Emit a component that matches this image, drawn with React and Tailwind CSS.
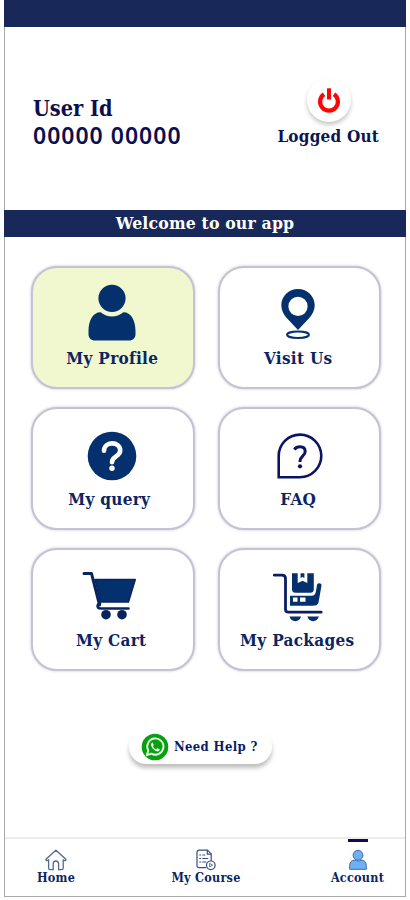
import clsx from 'clsx'

// ==========================================
// 1. ICONS
// ==========================================
function PowerIcon() {
  return (
    <svg width="24" height="26" viewBox="0 0 24 26" fill="none" stroke="#fb0505">
      <path d="M7 7.300a8.900 8.900 0 1 0 10 0" strokeWidth="4.200" />
      <path d="M12 1.300v11.200" strokeWidth="4" />
    </svg>
  )
}

function ProfileIcon() {
  return (
    <svg width="48" height="58" viewBox="0 0 48 58" fill="#04316d">
      <circle cx="24" cy="14.3" r="13.6" />
      <path d="M12.5 28.2C16 31 20 32.4 24 32.4s8-1.4 11.500-4.200C42.500 28 47.500 36 47.500 47v3c0 4-2.500 6.500-6.500 6.500H7C3 56.500.5 54 .5 50v-3C.5 36 5.500 28 12.500 28.200Z" />
    </svg>
  )
}

function PinIcon() {
  return (
    <svg width="36" height="52" viewBox="0 0 36 52" fill="none">
      <path fillRule="evenodd" fill="#04316d" d="M18 1C8.600 1 1.300 8.300 1.300 17.300c0 5 2.200 8.800 5.200 12.400L18 42l11.500-12.300c3-3.600 5.200-7.400 5.200-12.400C34.700 8.300 27.400 1 18 1Zm0 7.800a9.600 9.600 0 1 1 0 19.200 9.600 9.600 0 0 1 0-19.200Z" />
      <ellipse cx="18" cy="46.700" rx="11" ry="3.2" stroke="#04316d" strokeWidth="2" />
    </svg>
  )
}

function QueryIcon() {
  return (
    <svg width="50" height="50" viewBox="0 0 50 50" fill="none">
      <circle cx="25" cy="25" r="24.300" fill="#04316d" />
      <path d="M17 19.700c0-4.500 3.500-7.300 8-7.300s8.200 2.700 8.200 7.200c0 6.200-8.200 5.400-8.200 11.600" stroke="#fff" strokeWidth="4.600" strokeLinecap="round" />
      <circle cx="25" cy="37.300" r="2.700" fill="#fff" />
    </svg>
  )
}

function FaqIcon() {
  return (
    <svg width="46" height="46" viewBox="0 0 46 46" fill="none" stroke="#0b1462">
      <path d="M1.700 44.200V23A21.300 21.300 0 1 1 23 44.200Z" strokeWidth="2.600" />
      <path d="M17.300 16.500c1.500-2 3.500-2.700 5.700-2.700 3.300 0 5.200 1.800 5.200 4.700 0 4.500-5.200 4.700-5.200 9.500v1" strokeWidth="3" />
      <circle cx="23" cy="33.300" r="2.100" fill="#0b1462" stroke="none" />
    </svg>
  )
}

function CartIcon() {
  return (
    <svg width="54" height="50" viewBox="0 0 54 50" fill="none" stroke="#08245f" strokeLinecap="round" strokeLinejoin="round">
      <path d="M2 2.500h7.500L17.500 34" strokeWidth="3" />
      <path d="M13 8.500h40.300L46.500 31H18.500Z" fill="#04316d" strokeWidth="1.500" />
      <path d="M18 32.500c-3.500 1-3 5 .5 5H46.500" strokeWidth="2.600" />
      <circle cx="24" cy="43.700" r="4.800" fill="#08245f" stroke="none" />
      <circle cx="40" cy="43.700" r="4.800" fill="#08245f" stroke="none" />
    </svg>
  )
}

function PackagesIcon() {
  return (
    <svg width="50" height="51" viewBox="0 0 50 51" fill="#04316d">
      <path d="M1.300 3.200H9c2.500 0 3.500 1.200 3.500 3.500v30.500c0 2 1 3 3 3h32.700" fill="none" stroke="#0b1c66" strokeWidth="2.800" strokeLinecap="round" />
      <path d="M19 1.200h5.700V11l4.800-2.200 4.800 2.200V1.200h6.500V17c0 2.500-1 3.700-3.500 3.700H22.500c-2.500 0-3.500-1.200-3.500-3.700Z" />
      <path d="M27.600 1.200h3.800V6l-1.900-1.100L27.600 6Z" />
      <path fillRule="evenodd" d="M17 23.700h21.500c3 0 4-1.700 4.500-4.700l1-6c.5-2.700 4.800-2.200 4.500.5l-2.700 15.600c-.7 4-2.300 4.600-5.800 4.600H17Zm3 1.800v4.200h4.500v-4.200Zm7 0v4.200h5.500v-4.200Z" />
      <path d="M16.500 44.500h11.600c-1 2.800-3 4.700-5.800 4.700s-4.800-1.900-5.800-4.700ZM34.300 44.500h11.600c-1 2.800-3 4.700-5.800 4.700s-4.800-1.900-5.800-4.700Z" />
    </svg>
  )
}

function WhatsappIcon() {
  return (
    <svg width="28" height="28" viewBox="0 0 28 28" fill="none">
      <circle cx="14" cy="14" r="13.300" fill="#08a012" />
      <path d="m5.800 22.200 1.500-4.700a8.100 8.100 0 1 1 3.100 3.100Z" stroke="#e8ffe4" strokeWidth="1.900" strokeLinejoin="round" />
      <path d="M11.700 9.500c-1.700.5-2 2-1.300 3.700 1 2.400 2.700 4.100 5.200 5 1.700.6 3-.2 3.200-1.800l-2.500-1.300-1.200 1.300c-1.500-.7-2.500-1.700-3.200-3.200l1-1.200Z" fill="#e8ffe4" />
    </svg>
  )
}

function HomeIcon() {
  return (
    <svg width="22" height="22" viewBox="0 0 22 22" fill="none" stroke="#52688f" strokeWidth="1.300" strokeLinejoin="round">
      <path d="M10.900 1.200 1.200 10c-.7.900.3 2 1.300 1.500l1.100-.7V19c0 1 .6 1.700 1.600 1.700h3V15c0-2 1.100-3 2.700-3s2.700 1 2.700 3v5.700h3c1 0 1.600-.7 1.600-1.700v-8.200l1.200.7c1 .5 2-.6 1.200-1.500Z" />
    </svg>
  )
}

function CourseIcon() {
  return (
    <svg width="20" height="22" viewBox="0 0 20 22" fill="none" stroke="#36517d" strokeWidth="1.200" strokeLinecap="round">
      <path d="M9.500 18.700H3.200c-1.400 0-2.200-.8-2.200-2.200v-13C1 2 1.800 1.200 3.200 1.200h8.300l3.700 3.700v6.600" />
      <path d="M11.300 1.500v3.700H15" />
      <path d="M3.700 6h1M6.800 6h2M3.700 9.500h1M6.800 9.500h5M3.700 13h1M6.800 13h3" />
      <circle cx="14.800" cy="16.300" r="4.300" fill="#fff" />
      <path d="M13.600 14.700v3.200l2.700-1.600Z" strokeWidth=".8" />
    </svg>
  )
}

function AccountIcon() {
  return (
    <svg width="20" height="22" viewBox="0 0 20 22" fill="#6db1f4" stroke="#466a9e" strokeWidth="1">
      <circle cx="10" cy="6.200" r="4.900" />
      <path d="M1.700 20.300v-3.800c0-3.300 2-5.400 5-5.400 1.800 1.200 4.800 1.200 6.600 0 3 0 5 2.100 5 5.400v3.800Z" />
    </svg>
  )
}

// ==========================================
// 2. TILES AND TABS
// ==========================================
const tiles = [
  { label: 'My Profile', Icon: ProfileIcon, active: true, iconBox: 'pt-[16px] pr-[2px]', text: 'pr-[1px]' },
  { label: 'Visit Us', Icon: PinIcon, iconBox: 'pt-[20px] pr-[2px]', text: 'pr-[2px]' },
  { label: 'My query', Icon: QueryIcon, iconBox: 'pt-[22px] pr-[2px]', text: 'pr-[7px]' },
  { label: 'FAQ', Icon: FaqIcon, iconBox: 'pt-[24px] pl-[1px]', text: 'pr-[2px]' },
  { label: 'My Cart', Icon: CartIcon, iconBox: 'pt-[21px] pr-[7px]', text: 'pr-[3px]' },
  { label: 'My Packages', Icon: PackagesIcon, iconBox: 'pt-[22px] pr-[3px]', text: 'pr-[4px]' },
]

const tabs = [
  { label: 'Home', Icon: HomeIcon, box: 'w-[102px]' },
  { label: 'My Course', Icon: CourseIcon, box: 'w-[204px] pr-[6px]' },
  { label: 'Account', Icon: AccountIcon, active: true, box: 'w-[93px]' },
]

function Tile({ label, Icon, active, iconBox, text }) {
  return (
    <button
      className={clsx(
        'flex h-[123px] flex-col items-center rounded-[26px] border-2 border-[#c3c3d3] shadow-[0_0_3px_#c4c4d6]',
        active ? 'bg-[#f1f8cf]' : 'bg-white'
      )}
    >
      <span className={clsx('flex h-[78px] items-start', iconBox)}>
        <Icon />
      </span>
      <span className={clsx('text-[17px] leading-[24px] font-bold tracking-[0.3px] whitespace-nowrap text-[#0b2463]', text)}>
        {label}
      </span>
    </button>
  )
}

// ==========================================
// 3. ACCOUNT SCREEN
// ==========================================
export default function App() {
  return (
    <div className="h-[900px] w-[410px] bg-white pr-1 pl-1 font-['DejaVu_Serif_Condensed','DejaVu_Serif',serif] [font-stretch:condensed]">
      <div className="flex h-[897px] flex-col border border-t-0 border-[#a9a9a9]">
        <div className="-mx-px h-[27px] shrink-0 bg-[#172859]" />

        <header className="flex h-[183px] shrink-0 justify-between pr-[26px] pl-[28px]">
          <div className="pt-[69px] text-[#0b0f50]">
            <p className="text-[21.500px] leading-[26px] font-bold">User Id</p>
            <p className="font-['Noto_Sans',sans-serif] text-[23px] leading-[26px] font-semibold tracking-[1px]">00000 00000</p>
          </div>
          <div className="flex flex-col items-center pt-[51px]">
            <span className="ml-[2px] flex h-[44px] w-[44px] items-center justify-center rounded-full bg-white shadow-[0_3px_4px_rgba(0,0,0,0.22)]">
              <PowerIcon />
            </span>
            <span className="mt-[2px] text-[17px] leading-[24px] font-bold tracking-[0.2px] text-[#0b1650]">Logged Out</span>
          </div>
        </header>

        <div className="-mx-px flex h-[27px] shrink-0 items-center justify-center bg-[#172859] pb-[2px] text-[17.500px] leading-[24px] font-bold tracking-[0.15px] text-white">
          Welcome to our app
        </div>

        <main className="flex grow flex-col items-center">
          <div className="mt-[29px] ml-[2px] grid w-[350px] grid-cols-2 gap-x-[23px] gap-y-[18px]">
            {tiles.map((tile) => (
              <Tile key={tile.label} {...tile} />
            ))}
          </div>
          <button className="mt-[59px] mr-[9px] flex h-[34px] w-[143px] items-center gap-[5px] rounded-[17px] bg-white pl-[12px] text-[13px] font-bold tracking-[0.35px] whitespace-nowrap text-[#0b1c66] shadow-[0_4px_4px_rgba(0,0,0,0.25)]">
            <WhatsappIcon />
            Need Help ?
          </button>
        </main>

        <nav className="flex h-[59px] shrink-0 border-t-2 border-[#ececec]">
          {tabs.map(({ label, Icon, active, box }) => (
            <a key={label} className={clsx('flex shrink-0 flex-col items-center', box)}>
              <span className={clsx('h-[3px] w-[20px] shrink-0', active && 'bg-[#0b0f50]')} />
              <span className="mt-[7px] h-[21px]">
                <Icon />
              </span>
              <span className="text-[12.500px] leading-[15px] font-bold tracking-[0.25px] text-[#0b2463]">{label}</span>
            </a>
          ))}
        </nav>
      </div>
    </div>
  )
}
